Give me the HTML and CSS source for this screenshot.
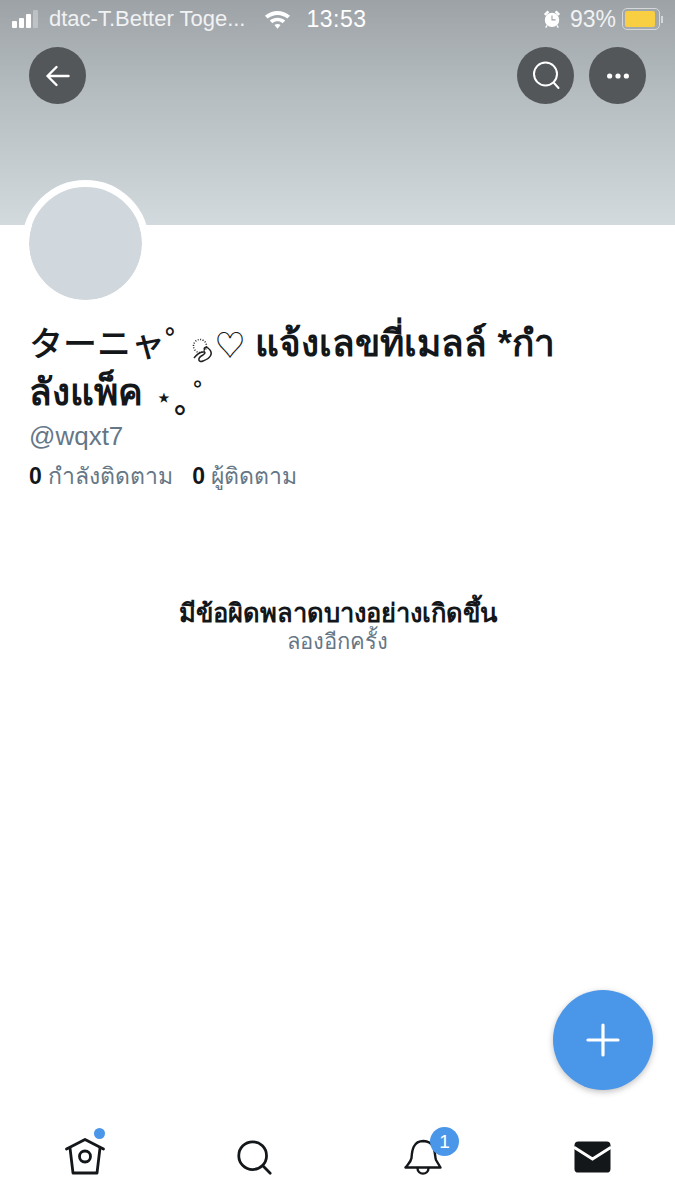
FILE: index.html
```html
<!DOCTYPE html>
<html lang="en">
<head>
    <meta charset="UTF-8">
    <meta name="viewport" content="width=device-width, initial-scale=1.0">
    <title>wqxt7</title>
    <link rel="stylesheet" href="styles.css">
</head>
<body>
    <header class="banner">
        <div class="status-bar">
            <div class="status-left">
                <div class="signal">
                    <span class="bar bar1"></span>
                    <span class="bar bar2"></span>
                    <span class="bar bar3"></span>
                    <span class="bar bar4"></span>
                </div>
                <span class="carrier">dtac-T.Better Toge...</span>
                <svg class="wifi" width="27" height="22" viewBox="0 0 28 22">
                    <path d="M1 7.5C8.500 1 19.500 1 27 7.500L24.200 10.500C18 5.500 10 5.500 3.800 10.500Z" fill="#fff"/>
                    <path d="M6 12.500C10.500 8.800 17.500 8.800 22 12.500L19.300 15.300C16 12.800 12 12.800 8.700 15.300Z" fill="#fff"/>
                    <path d="M10.800 17.300C12.700 15.900 15.300 15.900 17.200 17.300L14 21Z" fill="#fff"/>
                </svg>
                <span class="clock">13:53</span>
            </div>
            <div class="status-right">
                <svg class="alarm" width="18" height="22" viewBox="0 0 20 22">
                    <circle cx="10" cy="12" r="8" fill="#fff"/>
                    <path d="M10 7V12H14" fill="none" stroke="#9da2a6" stroke-width="1.200"/>
                    <path d="M1 5.500L5 1.500L7 3.500L3 7.500Z M19 5.500L15 1.500L13 3.500L17 7.500Z" fill="#fff"/>
                    <path d="M4.500 18L3 20.500 M15.500 18L17 20.500" stroke="#fff" stroke-width="1.500"/>
                </svg>
                <span class="battery-text">93%</span>
                <div class="battery"><div class="battery-fill"></div></div>
                <div class="battery-nub"></div>
            </div>
        </div>
        <div class="banner-actions">
            <button class="round-btn">
                <svg width="28" height="28" viewBox="0 0 28 28" fill="none" stroke="#fff" stroke-width="2.400" stroke-linecap="round" stroke-linejoin="round">
                    <path d="M24.500 14H3.500M12.500 5L3.500 14L12.500 23"/>
                </svg>
            </button>
            <div class="right-actions">
                <button class="round-btn">
                    <svg width="30" height="32" viewBox="0 0 30 32" fill="none" stroke="#fff" stroke-width="2" stroke-linecap="round">
                        <circle cx="14.500" cy="14" r="11.500"/>
                        <path d="M23 23L27.500 28"/>
                    </svg>
                </button>
                <button class="round-btn">
                    <svg width="26" height="8" viewBox="0 0 28 8" fill="#fff">
                        <circle cx="5" cy="4" r="2.800"/>
                        <circle cx="14" cy="4" r="2.800"/>
                        <circle cx="23" cy="4" r="2.800"/>
                    </svg>
                </button>
            </div>
        </div>
    </header>

    <main class="profile">
        <div class="avatar"></div>
        <h1 class="name"><span class="kana">ターニャ゜</span><svg class="curl" width="24" height="26" viewBox="0 0 24 26" fill="none" stroke="#222" stroke-width="1.500"><circle cx="9" cy="8" r="6.500" stroke-dasharray="1 1.500"/><path d="M3 20C9 12 18 13 12 17C6 20 7 25 12 23C20 20 23 15 17 10C14 8 12 11 14 12"/></svg><span class="heart">♡</span> แจ้งเลขที่เมลล์ *กำลังแพ็ค <span class="tiny-star">⋆</span><span class="tiny-ring">｡</span><span class="kana small-ring">゜</span></h1>
        <div class="handle">@wqxt7</div>
        <div class="follows">
            <span><b>0</b> กำลังติดตาม</span>
            <span><b>0</b> ผู้ติดตาม</span>
        </div>
        <div class="error-box">
            <div class="error-title">มีข้อผิดพลาดบางอย่างเกิดขึ้น</div>
            <div class="error-retry">ลองอีกครั้ง</div>
        </div>
    </main>

    <button class="fab">
        <svg width="34" height="34" viewBox="0 0 34 34" stroke="#fff" stroke-width="3.200" stroke-linecap="round">
            <path d="M17 2V32M2 17H32"/>
        </svg>
    </button>

    <nav class="tabs">
        <div class="tab">
            <svg width="42" height="42" viewBox="0 0 42 42" fill="none" stroke="#14171a" stroke-width="2.800" stroke-linejoin="round" stroke-linecap="round">
                <path d="M2.500 13L21 3.500L39.500 13"/>
                <path d="M6 12L9 37H33L36 12"/>
                <circle cx="21" cy="20.500" r="5.500"/>
            </svg>
            <span class="dot"></span>
        </div>
        <div class="tab">
            <svg width="37" height="37" viewBox="0 0 40 40" fill="none" stroke="#14171a" stroke-width="3" stroke-linecap="round">
                <circle cx="18" cy="18" r="15"/>
                <path d="M29 29L37 37"/>
            </svg>
        </div>
        <div class="tab">
            <svg width="38" height="38" viewBox="0 0 38 38" fill="none" stroke="#14171a" stroke-width="2.400" stroke-linecap="round" stroke-linejoin="round">
                <path d="M1.500 29.500H36.500L32 22C30 17 33 4 19.500 3C8 3 8 15 7.500 20C7 24 4 26 1.500 29.500Z"/>
                <path d="M13.500 30C13.500 37.500 24.500 37.500 24.500 30"/>
            </svg>
            <span class="badge">1</span>
        </div>
        <div class="tab">
            <svg width="37" height="34" viewBox="0 0 38 34">
                <rect x="0.500" y="1" width="37" height="32" rx="4" fill="#14171a"/>
                <path d="M0 7L19 19L38 7" fill="none" stroke="#fff" stroke-width="3"/>
            </svg>
        </div>
    </nav>
</body>
</html>
```

FILE: styles.css
```css
* {
    box-sizing: border-box;
}
body {
    margin: 0;
    width: 675px;
    height: 1200px;
    position: relative;
    display: flex;
    flex-direction: column;
    overflow: hidden;
    background: #fff;
    font-family: "Liberation Sans", "Noto Sans", "Noto Sans CJK JP", sans-serif;
    color: #14171a;
}
button {
    border: none;
    padding: 0;
    cursor: pointer;
}

/* banner + status bar */
.banner {
    height: 225px;
    flex: none;
    background: linear-gradient(#9da2a6 0%, #b4bcbf 40%, #d3dade 100%);
    padding: 0 29px;
}
.status-bar {
    height: 38px;
    margin: 0 -17px 0 -17px;
    display: flex;
    justify-content: space-between;
    align-items: center;
    color: #fff;
    font-size: 22px;
}
.status-left, .status-right {
    display: flex;
    align-items: center;
}
.signal {
    display: flex;
    align-items: flex-end;
    gap: 2px;
    height: 18px;
    margin-right: 11px;
}
.bar {
    width: 5px;
    background: #fff;
    border-radius: 1px;
}
.bar1 { height: 7px; }
.bar2 { height: 10px; }
.bar3 { height: 14px; }
.bar4 { height: 18px; opacity: 0.3; }
.carrier {
    color: #f1f2f3;
}
.wifi {
    margin-left: 19px;
}
.clock {
    margin-left: 15px;
    font-size: 23px;
    letter-spacing: 0.5px;
}
.alarm {
    margin-right: 9px;
}
.battery-text {
    margin-right: 6px;
    font-size: 23px;
    color: #f1f2f3;
}
.battery {
    width: 38px;
    height: 22px;
    padding: 2px;
    border: 1.500px solid #d5d8da;
    border-radius: 5px;
}
.battery-fill {
    width: 93%;
    height: 100%;
    background: #f8ce43;
    border-radius: 2px;
}
.battery-nub {
    width: 2px;
    height: 7px;
    margin-left: 1px;
    background: #d5d8da;
}
.banner-actions {
    margin-top: 9px;
    display: flex;
    justify-content: space-between;
}
.right-actions {
    display: flex;
    gap: 15px;
}
.round-btn {
    width: 57px;
    height: 57px;
    border-radius: 50%;
    background: #53575a;
    display: flex;
    align-items: center;
    justify-content: center;
}

/* profile */
.profile {
    flex: 1;
    padding: 0 29px;
}
.avatar {
    width: 127px;
    height: 127px;
    margin: -45px 0 0 -7px;
    border: 7px solid #fff;
    border-radius: 50%;
    background: #d0d8de;
    background-clip: padding-box;
}
.name {
    margin: 13px 0 0;
    width: 535px;
    font-size: 37px;
    line-height: 47px;
    font-weight: bold;
    color: #14171a;
}
.kana {
    font-size: 34px;
    font-weight: 500;
}
.curl {
    margin-left: -8px;
    vertical-align: -8px;
}
.heart {
    font-weight: normal;
    font-size: 30px;
}
.tiny-star {
    font-size: 22px;
    margin-left: 4px;
}
.tiny-ring {
    font-size: 30px;
    line-height: 0;
    margin-left: 3px;
    vertical-align: -7px;
}
.small-ring {
    font-size: 30px;
    margin-left: 4px;
}
.handle {
    margin-top: -2px;
    font-size: 26px;
    line-height: 34px;
    color: #657786;
}
.follows {
    margin-top: 9px;
    display: flex;
    gap: 19px;
    font-size: 23px;
    line-height: 28px;
    color: #657786;
}
.follows b {
    color: #14171a;
}
.error-box {
    margin-top: 107px;
    text-align: center;
    margin-left: -29px;
    margin-right: -29px;
}
.error-title {
    font-size: 25.500px;
    line-height: 32px;
    font-weight: bold;
}
.error-retry {
    font-size: 22px;
    line-height: 26px;
    color: #657786;
}

/* floating compose button */
.fab {
    position: absolute;
    left: 553px;
    top: 990px;
    width: 100px;
    height: 100px;
    border-radius: 50%;
    background: #4a96e8;
    box-shadow: 0 2px 6px rgba(0, 0, 0, 0.25);
    display: flex;
    align-items: center;
    justify-content: center;
}

/* bottom tabs */
.tabs {
    height: 90px;
    flex: none;
    padding: 0 41px 0 43px;
    display: flex;
    justify-content: space-between;
    align-items: flex-start;
}
.tab {
    position: relative;
    width: 84px;
    height: 42px;
    margin-top: 26px;
    display: flex;
    justify-content: center;
    align-items: center;
}
.dot {
    position: absolute;
    left: 51px;
    top: -8px;
    width: 11px;
    height: 11px;
    border-radius: 50%;
    background: #4a96e8;
}
.badge {
    position: absolute;
    left: 49px;
    top: -9px;
    width: 29px;
    height: 29px;
    border-radius: 50%;
    background: #4a96e8;
    color: #fff;
    font-size: 19px;
    line-height: 29px;
    text-align: center;
}
```
